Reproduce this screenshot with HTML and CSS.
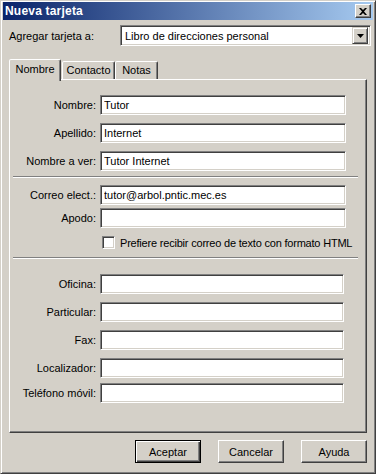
FILE: index.html
```html
<!DOCTYPE html>
<html lang="es">
<head>
    <meta charset="UTF-8">
    <title>Nueva tarjeta</title>
    <link rel="stylesheet" href="styles.css">
</head>
<body>
    <div class="window">
        <div class="titlebar">
            <span class="title">Nueva tarjeta</span>
            <span class="close-btn">
                <svg width="8" height="7" viewBox="0 0 8 7"><path d="M0 0h2l2 2 2-2h2L5 3.5 8 7H6L4 5 2 7H0l3-3.5z" fill="#000"/></svg>
            </span>
        </div>

        <div class="content">
            <div class="target-row">
                <label class="target-label">Agregar tarjeta a:</label>
                <div class="combo">
                    <span class="combo-text">Libro de direcciones personal</span>
                    <span class="combo-btn">
                        <svg width="7" height="4" viewBox="0 0 7 4"><path d="M0 0h7L3.5 4z" fill="#000"/></svg>
                    </span>
                </div>
            </div>

            <div class="tabs">
                <div class="tab active tab-nombre">Nombre</div>
                <div class="tab tab-contacto">Contacto</div>
                <div class="tab tab-notas">Notas</div>
            </div>

            <div class="panel">
                <div class="group group-name">
                    <div class="row"><label>Nombre:</label><input type="text" value="Tutor"></div>
                    <div class="row"><label>Apellido:</label><input type="text" value="Internet"></div>
                    <div class="row"><label>Nombre a ver:</label><input type="text" value="Tutor Internet"></div>
                </div>
                <div class="sep"></div>
                <div class="group group-mail">
                    <div class="row"><label>Correo elect.:</label><input type="text" value="tutor@arbol.pntic.mec.es"></div>
                    <div class="row"><label>Apodo:</label><input type="text" value=""></div>
                    <div class="check-row">
                        <span class="checkbox"></span>
                        <span class="check-text">Prefiere recibir correo de texto con formato HTML</span>
                    </div>
                </div>
                <div class="sep sep-low"></div>
                <div class="group group-phone">
                    <div class="row"><label>Oficina:</label><input type="text" value=""></div>
                    <div class="row"><label>Particular:</label><input type="text" value=""></div>
                    <div class="row"><label>Fax:</label><input type="text" value=""></div>
                    <div class="row"><label>Localizador:</label><input type="text" value=""></div>
                    <div class="row row-last"><label>Teléfono móvil:</label><input type="text" value=""></div>
                </div>
            </div>

            <div class="buttons">
                <button class="btn default">Aceptar</button>
                <button class="btn">Cancelar</button>
                <button class="btn">Ayuda</button>
            </div>
        </div>
    </div>
</body>
</html>
```

FILE: styles.css
```css
/* General Reset */
* {
    margin: 0;
    padding: 0;
    box-sizing: border-box;
}

body {
    font-family: 'Liberation Sans', Arial, sans-serif;
    font-size: 11px;
    color: #000;
    background-color: #d4d0c8;
}

.window {
    width: 376px;
    height: 474px;
    background-color: #d4d0c8;
    border: 1px solid;
    border-color: #d4d0c8 #404040 #404040 #d4d0c8;
    box-shadow: inset 1px 1px #fff, inset -1px -1px #808080;
    padding: 1px 2px 2px 2px;
    display: flex;
    flex-direction: column;
}

/* Title bar */
.titlebar {
    height: 18px;
    background: linear-gradient(to right, #0a246a, #a6caf0);
    color: #fff;
    font-weight: bold;
    font-size: 12px;
    display: flex;
    align-items: center;
    justify-content: space-between;
    padding: 0 2px 0 2px;
}

.title {
    letter-spacing: 0.2px;
}

.close-btn {
    width: 16px;
    height: 14px;
    background-color: #d4d0c8;
    border: 1px solid;
    border-color: #fff #404040 #404040 #fff;
    box-shadow: inset -1px -1px #808080;
    display: flex;
    align-items: center;
    justify-content: center;
}

.content {
    flex: 1;
    padding: 0 6px;
    display: flex;
    flex-direction: column;
}

/* Address book selector */
.target-row {
    display: flex;
    align-items: center;
    margin-top: 5px;
}

.target-label {
    width: 111px;
}

.combo {
    width: 251px;
    height: 21px;
    margin-right: -4px;
    background-color: #fff;
    border: 1px solid;
    border-color: #808080 #fff #fff #808080;
    box-shadow: inset 1px 1px #404040, inset -1px -1px #d4d0c8;
    display: flex;
    align-items: center;
    justify-content: space-between;
    padding: 2px;
}

.combo-text {
    padding-left: 2px;
}

.combo-btn {
    width: 16px;
    height: 17px;
    background-color: #d4d0c8;
    border: 1px solid;
    border-color: #d4d0c8 #404040 #404040 #d4d0c8;
    box-shadow: inset 1px 1px #fff, inset -1px -1px #808080;
    display: flex;
    align-items: center;
    justify-content: center;
}

/* Tabs */
.tabs {
    display: flex;
    align-items: flex-end;
    margin-top: 13px;
    height: 20px;
}

.tab {
    height: 18px;
    line-height: 16px;
    text-align: center;
    border: 1px solid;
    border-bottom: none;
    border-color: #fff #404040 transparent #fff;
    box-shadow: inset -1px 0 #808080;
    border-radius: 2px 2px 0 0;
    background-color: #d4d0c8;
}

.tab.active {
    height: 22px;
    line-height: 18px;
    margin-bottom: -2px;
    position: relative;
    z-index: 1;
}

.tab-nombre { width: 52px; }
.tab-contacto { width: 53px; margin-left: 1px; }
.tab-notas { width: 43px; }

/* Tab panel */
.panel {
    height: 354px;
    border: 1px solid;
    border-color: #fff #404040 #404040 #fff;
    box-shadow: inset -1px -1px #808080;
    padding-top: 15px;
}

.group {
    display: flex;
    flex-direction: column;
    gap: 8px;
}

.group-mail {
    margin-top: 7px;
    gap: 3px;
}

.group-phone {
    margin-top: 15px;
}

.row {
    display: flex;
    align-items: center;
    height: 20px;
}

.row label {
    width: 86px;
    margin-right: 4px;
    text-align: right;
}

.row input {
    width: 246px;
    height: 20px;
    font-family: 'Liberation Sans', Arial, sans-serif;
    font-size: 11px;
    padding: 0 3px;
    background-color: #fff;
    border: 1px solid;
    border-color: #808080 #fff #fff #808080;
    box-shadow: inset 1px 1px #404040, inset -1px -1px #d4d0c8;
    outline: none;
}

.group-phone .row input {
    width: 244px;
}

.group-phone .row-last {
    margin-top: -3px;
}

.check-row {
    display: flex;
    align-items: center;
    margin-top: 5px;
    padding-left: 92px;
    height: 13px;
}

.check-text {
    letter-spacing: -0.2px;
}

.checkbox {
    width: 13px;
    height: 13px;
    margin-right: 5px;
    background-color: #fff;
    border: 1px solid;
    border-color: #808080 #fff #fff #808080;
    box-shadow: inset 1px 1px #404040, inset -1px -1px #d4d0c8;
}

.sep {
    height: 2px;
    margin: 5px 8px 0 3px;
    border-top: 1px solid #808080;
    border-bottom: 1px solid #fff;
}

.sep-low {
    margin-top: 8px;
}

/* Dialog buttons */
.buttons {
    display: flex;
    justify-content: flex-end;
    gap: 17px;
    margin-top: 7px;
}

.btn {
    width: 66px;
    height: 23px;
    font-family: 'Liberation Sans', Arial, sans-serif;
    font-size: 11px;
    color: #000;
    background-color: #d4d0c8;
    border: 1px solid;
    border-color: #fff #404040 #404040 #fff;
    box-shadow: inset -1px -1px #808080;
}

.btn.default {
    border-color: #000;
    box-shadow: inset 1px 1px #fff, inset -1px -1px #404040, inset -2px -2px #808080;
}
```
